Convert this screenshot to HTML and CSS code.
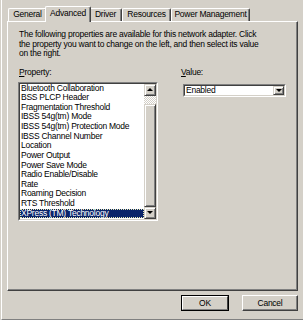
FILE: index.html
```
<!DOCTYPE html>
<html>
<head>
<meta charset="utf-8">
<link rel="stylesheet" href="styles.css">
</head>
<body>
<div class="dialog">
  <div class="tabs">
    <div class="tab tab-general">General</div>
    <div class="tab tab-advanced selected">Advanced</div>
    <div class="tab tab-driver">Driver</div>
    <div class="tab tab-resources">Resources</div>
    <div class="tab tab-power">Power Management</div>
  </div>
  <div class="panel">
    <p class="desc">The following properties are available for this network adapter. Click<br>the property you want to change on the left, and then select its value<br>on the right.</p>
    <div class="fields">
      <div class="col-left">
        <div class="label"><u>P</u>roperty:</div>
        <div class="list">
          <div class="list-inner">
            <div class="items">
              <div class="item">Bluetooth Collaboration</div>
              <div class="item">BSS PLCP Header</div>
              <div class="item">Fragmentation Threshold</div>
              <div class="item">IBSS 54g(tm) Mode</div>
              <div class="item">IBSS 54g(tm) Protection Mode</div>
              <div class="item">IBSS Channel Number</div>
              <div class="item">Location</div>
              <div class="item">Power Output</div>
              <div class="item">Power Save Mode</div>
              <div class="item">Radio Enable/Disable</div>
              <div class="item">Rate</div>
              <div class="item">Roaming Decision</div>
              <div class="item">RTS Threshold</div>
              <div class="item sel">XPress (TM) Technology</div>
            </div>
            <div class="scroll">
              <div class="sbtn"><span class="arrow-up"></span></div>
              <div class="track"></div>
              <div class="thumb"></div>
              <div class="sbtn"><span class="arrow-down"></span></div>
            </div>
          </div>
        </div>
      </div>
      <div class="col-right">
        <div class="label"><u>V</u>alue:</div>
        <div class="combo">
          <div class="combo-inner">
            <span class="combo-text">Enabled</span>
            <span class="combo-btn"><span class="arrow-down"></span></span>
          </div>
        </div>
      </div>
    </div>
  </div>
  <div class="buttons">
    <div class="btn default"><div class="btn-face">OK</div></div>
    <div class="btn cancel"><div class="btn-face">Cancel</div></div>
  </div>
</div>
</body>
</html>
```
FILE: styles.css
```
* { box-sizing: border-box; }
html, body { margin: 0; padding: 0; }
body {
  background: #d4d0c8;
  font-family: "Liberation Sans", Arial, sans-serif;
  font-size: 8.5px;
  letter-spacing: -0.25px;
  color: #000;
  width: 303px;
  height: 320px;
  overflow: hidden;
}
.dialog {
  margin-left: 1px;
  width: 302px;
  height: 320px;
  border-left: 1px solid #fff;
  border-bottom: 1px solid #808080;
  padding: 6px 0 0 5px;
  display: flex;
  flex-direction: column;
}
.tabs {
  display: flex;
  align-items: flex-end;
  height: 15px;
  padding-left: 1px;
  position: relative;
  z-index: 1;
}
.tab {
  height: 13px;
  line-height: 11px;
  text-align: center;
  white-space: nowrap;
  background: #d4d0c8;
  border-top: 1px solid #fff;
  border-left: 1px solid #fff;
  border-right: 1px solid #404040;
  border-top-left-radius: 2px;
  border-top-right-radius: 2px;
  box-shadow: inset -1px 0 #808080;
}
.tab.selected {
  height: 16px;
  margin: 0 -2px -1px -2px;
  padding-top: 1px;
  position: relative;
  z-index: 2;
}
.tab-general { width: 39px; }
.tab-advanced { width: 46px; }
.tab-driver { width: 33px; }
.tab-resources { width: 49px; }
.tab-power { width: 79px; }

.panel {
  width: 291px;
  height: 270px;
  border-top: 1px solid #fff;
  border-left: 1px solid #fff;
  border-right: 1px solid #404040;
  border-bottom: 1px solid #404040;
  box-shadow: inset -1px -1px #808080;
}
.desc {
  margin: 8px 0 0 11px;
  line-height: 9.64px;
  white-space: nowrap;
}
.fields {
  display: flex;
  margin-top: 9px;
  padding-left: 10px;
}
.label { line-height: 9.64px; }
.col-left { width: 140px; }
.col-left .label { padding-left: 1px; }
.col-right { margin-left: 23px; }

.list {
  margin-top: 4px;
  height: 139px;
  border-top: 1px solid #808080;
  border-left: 1px solid #808080;
  border-right: 1px solid #fff;
  border-bottom: 1px solid #fff;
}
.list-inner {
  height: 100%;
  display: flex;
  background: #fff;
  border-top: 1px solid #404040;
  border-left: 1px solid #404040;
  border-right: 1px solid #d4d0c8;
  border-bottom: 1px solid #d4d0c8;
}
.items { flex: 1; }
.item {
  height: 9.64px;
  line-height: 9.64px;
  padding-left: 1px;
  white-space: nowrap;
  overflow: hidden;
}
.item.sel {
  background: #0a246a;
  color: #fff;
  outline: 1px dotted #e8e8b0;
  outline-offset: -1px;
}
.scroll {
  width: 12px;
  display: flex;
  flex-direction: column;
}
.sbtn, .thumb, .combo-btn {
  background: #d4d0c8;
  border-top: 1px solid #d4d0c8;
  border-left: 1px solid #d4d0c8;
  border-right: 1px solid #404040;
  border-bottom: 1px solid #404040;
  box-shadow: inset 1px 1px #fff, inset -1px -1px #808080;
}
.sbtn {
  height: 12px;
  display: flex;
  align-items: center;
  justify-content: center;
}
.track {
  height: 8px;
  background: repeating-conic-gradient(#fff 0 25%, #d4d0c8 0 50%) 0 0 / 2px 2px;
}
.thumb { flex: 1; }
.arrow-up {
  width: 0; height: 0;
  border-left: 3px solid transparent;
  border-right: 3px solid transparent;
  border-bottom: 3px solid #000;
}
.arrow-down {
  width: 0; height: 0;
  border-left: 3px solid transparent;
  border-right: 3px solid transparent;
  border-top: 3px solid #000;
}

.combo {
  margin: 6px 0 0 2px;
  width: 103px;
  height: 13px;
  border-top: 1px solid #808080;
  border-left: 1px solid #808080;
  border-right: 1px solid #fff;
  border-bottom: 1px solid #fff;
}
.combo-inner {
  height: 100%;
  display: flex;
  align-items: stretch;
  background: #fff;
  border-top: 1px solid #404040;
  border-left: 1px solid #404040;
  border-right: 1px solid #d4d0c8;
  border-bottom: 1px solid #d4d0c8;
}
.combo-text {
  flex: 1;
  padding-left: 1px;
  line-height: 9px;
}
.combo-btn {
  width: 11px;
  display: flex;
  align-items: center;
  justify-content: center;
}

.buttons {
  display: flex;
  justify-content: flex-end;
  gap: 13px;
  margin-top: 4px;
  padding-right: 5px;
}
.btn {
  height: 16px;
  border-top: 1px solid #fff;
  border-left: 1px solid #fff;
  border-right: 1px solid #404040;
  border-bottom: 1px solid #404040;
  box-shadow: inset -1px -1px #808080;
}
.btn.default {
  width: 48px;
  border: 1px solid #000;
  box-shadow: none;
}
.btn.default .btn-face {
  height: 100%;
  border-top: 1px solid #fff;
  border-left: 1px solid #fff;
  border-right: 1px solid #404040;
  border-bottom: 1px solid #808080;
  line-height: 12px;
}
.btn.cancel { width: 56px; }
.btn-face {
  text-align: center;
  line-height: 14px;
}
```
